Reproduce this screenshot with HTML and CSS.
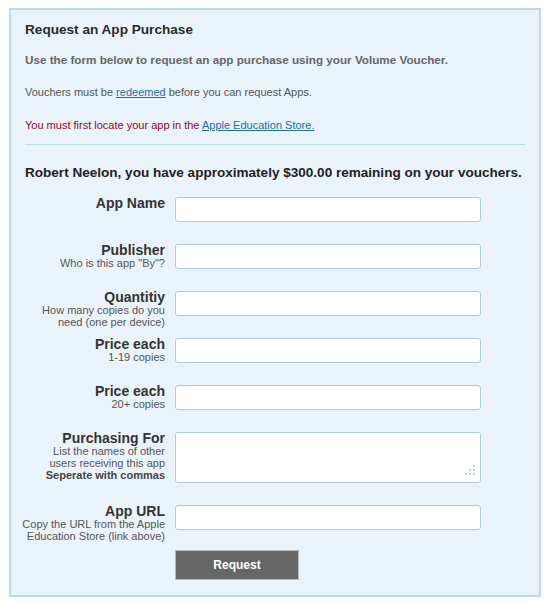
FILE: index.html
```html
<!DOCTYPE html>
<html>
<head>
<meta charset="utf-8">
<link rel="stylesheet" href="styles.css">
</head>
<body>
<div class="panel">
  <h2 class="title">Request an App Purchase</h2>
  <p class="intro">Use the form below to request an app purchase using your Volume Voucher.</p>
  <p class="note">Vouchers must be <a href="#">redeemed</a> before you can request Apps.</p>
  <p class="note warn">You must first locate your app in the <a href="#">Apple Education Store.</a></p>
  <hr class="rule">
  <h3 class="balance">Robert Neelon, you have approximately $300.00 remaining on your vouchers.</h3>
  <form class="form">
    <div class="row">
      <label class="lbl"><span class="lt">App Name</span></label>
      <input class="field" type="text">
    </div>
    <div class="row">
      <label class="lbl"><span class="lt">Publisher</span><span class="ls">Who is this app "By"?</span></label>
      <input class="field" type="text">
    </div>
    <div class="row">
      <label class="lbl"><span class="lt">Quantitiy</span><span class="ls">How many copies do you</span><span class="ls">need (one per device)</span></label>
      <input class="field" type="text">
    </div>
    <div class="row">
      <label class="lbl"><span class="lt">Price each</span><span class="ls">1-19 copies</span></label>
      <input class="field" type="text">
    </div>
    <div class="row">
      <label class="lbl"><span class="lt">Price each</span><span class="ls">20+ copies</span></label>
      <input class="field" type="text">
    </div>
    <div class="row tall">
      <label class="lbl"><span class="lt">Purchasing For</span><span class="ls">List the names of other</span><span class="ls">users receiving this app</span><span class="ls strong">Seperate with commas</span></label>
      <div class="area-wrap">
        <textarea class="field area"></textarea>
        <svg class="grip" width="10" height="10" viewBox="0 0 10 10" aria-hidden="true">
          <rect x="8" y="0" width="1.5" height="1.5" fill="#b0b0b0"/>
          <rect x="4" y="4" width="1.5" height="1.5" fill="#b0b0b0"/>
          <rect x="8" y="4" width="1.5" height="1.5" fill="#b0b0b0"/>
          <rect x="0" y="8" width="1.5" height="1.5" fill="#b0b0b0"/>
          <rect x="4" y="8" width="1.5" height="1.5" fill="#b0b0b0"/>
          <rect x="8" y="8" width="1.5" height="1.5" fill="#b0b0b0"/>
        </svg>
      </div>
    </div>
    <div class="row url">
      <label class="lbl"><span class="lt">App URL</span><span class="ls">Copy the URL from the Apple</span><span class="ls">Education Store (link above)</span></label>
      <input class="field" type="text">
    </div>
    <div class="row actions">
      <span></span>
      <button class="btn" type="button">Request</button>
    </div>
  </form>
</div>
</body>
</html>
```

FILE: styles.css
```css
html, body {
  margin: 0;
  padding: 0;
  background: #ffffff;
}
body {
  font-family: "Liberation Sans", Arial, sans-serif;
  color: #333;
}
.panel {
  margin: 8px 8px 0 9px;
  width: 532px;
  height: 589px;
  border: 2px solid #b7dcf1;
  background: #eaf3fa;
  padding: 12px 14px 0 14px;
  box-sizing: border-box;
}
.title {
  margin: 0;
  font-size: 13.6px;
  line-height: 16px;
  font-weight: bold;
  color: #2a2a2a;
}
.intro {
  margin: 15px 0 0;
  font-size: 11.7px;
  line-height: 14px;
  font-weight: bold;
  color: #666;
}
.note {
  margin: 18px 0 0;
  font-size: 11px;
  line-height: 14px;
  color: #555;
}
.note a {
  color: #1b6f9e;
  text-decoration: underline;
}
.note.warn {
  margin-top: 19px;
  color: #8f0a1a;
}
.rule {
  margin: 12px 0 0;
  border: 0;
  height: 1px;
  background: #b7dcf1;
}
.balance {
  margin: 19px 0 0;
  font-size: 13.55px;
  line-height: 18px;
  font-weight: bold;
  color: #222;
  white-space: nowrap;
}
.form {
  margin-top: 15px;
}
.row {
  display: grid;
  grid-template-columns: 140px 306px;
  column-gap: 10px;
  height: 47px;
  align-items: start;
}
.row.tall {
  height: 73px;
}
.row.url {
  height: 45px;
}
.lbl {
  display: flex;
  flex-direction: column;
  align-items: flex-end;
  text-align: right;
  margin-top: -1px;
}
.lt {
  font-size: 14px;
  line-height: 14px;
  font-weight: bold;
  color: #333;
}
.ls {
  font-size: 11px;
  line-height: 12px;
  color: #555;
  white-space: nowrap;
}
.ls.strong {
  font-weight: bold;
  color: #444;
}
.field {
  display: block;
  width: 306px;
  height: 25px;
  box-sizing: border-box;
  border: 1px solid #a9cfe8;
  border-radius: 3px;
  background: #fff;
  margin: 0;
  padding: 2px 4px;
  font-family: inherit;
  font-size: 12px;
}
.area-wrap {
  position: relative;
  width: 306px;
  height: 51px;
}
.area {
  height: 51px;
  resize: none;
}
.grip {
  position: absolute;
  right: 6px;
  bottom: 8px;
}
.btn {
  width: 124px;
  height: 30px;
  background: #666666;
  border: 1px solid #b9b9b9;
  color: #fff;
  font-family: inherit;
  font-weight: bold;
  font-size: 12px;
  padding: 0;
  cursor: pointer;
}
```
